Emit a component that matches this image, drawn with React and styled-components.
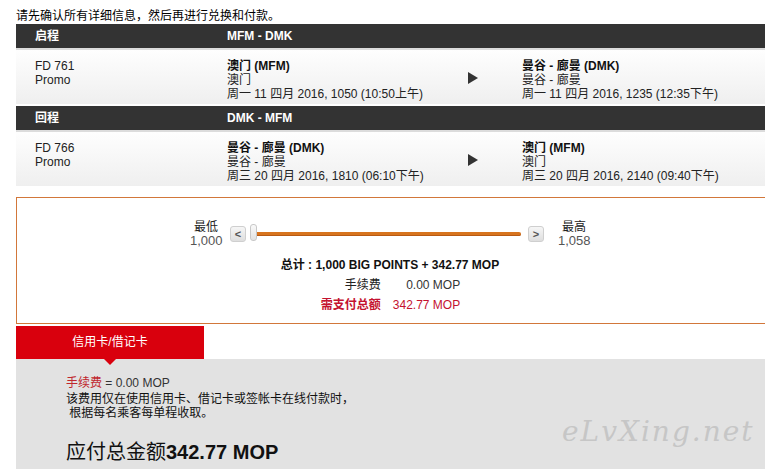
import React from "react"
import styled, { createGlobalStyle } from "styled-components"

const GlobalStyle = createGlobalStyle`
  body {
    margin: 0;
    background: #fff;
    color: #222;
    font-family: "Liberation Sans", Arial, "Noto Sans CJK SC", sans-serif;
    font-size: 12px;
    overflow: hidden;
  }
`

const Page = styled.div`
  padding: 9px 0 0 16px;
  width: 770px;
  position: relative;
`

const Intro = styled.div`
  line-height: 15px;
  color: #000;
`

const LegHeader = styled.div`
  display: grid;
  grid-template-columns: 192px 1fr;
  padding-left: 19px;
  height: 24px;
  line-height: 24px;
  background: #333;
  color: #fff;
  font-weight: bold;
  margin-top: ${(p) => (p.$first ? "0" : "2px")};
`

const LegRow = styled.div`
  display: grid;
  grid-template-columns: 192px 241px 54px 1fr;
  align-items: center;
  padding: 9px 0 3px 19px;
  border-top: 2px solid #dcdcdc;
  background: linear-gradient(#fefefe, #efefef);
  line-height: 14px;
  color: #222;
`

const Cell = styled.div`
  align-self: start;
`

const Strong = styled.div`
  font-weight: bold;
  color: #111;
`

const Arrow = styled.div`
  width: 0;
  height: 0;
  border-top: 6px solid transparent;
  border-bottom: 6px solid transparent;
  border-left: 10px solid #333;
  margin-top: -4px;
`

const PointsBox = styled.div`
  margin-top: 11px;
  border: 1px solid #d2773a;
  padding: 22px 22px 8px 0;
  display: flex;
  flex-direction: column;
  align-items: center;
`

const SliderRow = styled.div`
  display: flex;
  align-items: center;
  height: 28px;
  margin-bottom: 7px;
`

const Bound = styled.div`
  text-align: center;
  line-height: 14px;
  color: #222;
  width: 32px;
  margin-left: ${(p) => p.$offset || "0"};

  span {
    display: block;
    color: #555;
    font-size: 13px;
  }
`

const StepButton = styled.div`
  width: 16px;
  height: 16px;
  box-sizing: border-box;
  border: 1px solid #cfcfcf;
  border-radius: 3px;
  background: linear-gradient(#f6f6f6, #dedede);
  color: #555;
  font-weight: bold;
  font-size: 11px;
  line-height: 14px;
  text-align: center;
  margin: ${(p) => p.$margin};
`

const Track = styled.div`
  position: relative;
  width: 270px;
  height: 4px;
  border-radius: 2px;
  background: #d7741e;
  box-shadow: inset 0 -1px 0 #b85a14;
  margin-left: 5px;
`

const Thumb = styled.div`
  position: absolute;
  left: -1px;
  top: -8px;
  width: 7px;
  height: 17px;
  box-sizing: border-box;
  border: 1px solid #c8c8c8;
  border-radius: 3px;
  background: linear-gradient(#fafafa, #e2e2e2);
`

const TotalLine = styled.div`
  line-height: 20px;
  font-weight: bold;
  color: #111;
`

const FeeTable = styled.div`
  display: grid;
  grid-template-columns: auto auto;
  column-gap: 12px;
  line-height: 20px;
  margin-left: 1px;
`

const FeeLabel = styled.div`
  text-align: right;
  color: ${(p) => (p.$red ? "#c4122f" : "#222")};
  font-weight: ${(p) => (p.$red ? "bold" : "normal")};
`

const FeeValue = styled.div`
  text-align: right;
  color: ${(p) => (p.$red ? "#c4122f" : "#333")};
`

const TabBar = styled.div`
  margin-top: 2px;
  display: flex;
`

const Tab = styled.div`
  position: relative;
  width: 188px;
  height: 33px;
  line-height: 33px;
  background: #d9000d;
  color: #fff;
  text-align: center;

  &::after {
    content: "";
    position: absolute;
    left: 88px;
    bottom: -6px;
    border-left: 6px solid transparent;
    border-right: 6px solid transparent;
    border-top: 6px solid #d9000d;
  }
`

const PayPanel = styled.div`
  background: #e2e2e2;
  padding: 17px 0 40px 50px;
  line-height: 14px;
  color: #111;
`

const FeeNote = styled.div`
  margin-bottom: 2px;
  color: #333;

  b {
    font-weight: normal;
    color: #c0272d;
  }
`

const AmountDue = styled.div`
  margin-top: 20px;
  font-size: 20px;
  line-height: 24px;
  color: #111;

  b {
    font-weight: bold;
  }
`

const Watermark = styled.div`
  position: absolute;
  left: 562px;
  top: 415px;
  font-family: "DejaVu Serif", "Liberation Serif", serif;
  font-style: italic;
  font-size: 28px;
  letter-spacing: 2px;
  color: #c6c6c6;
`

const legs = [
  {
    title: "启程",
    route: "MFM - DMK",
    flight: "FD 761",
    from: { name: "澳门 (MFM)", city: "澳门", time: "周一 11 四月 2016, 1050 (10:50上午)" },
    to: { name: "曼谷 - 廊曼 (DMK)", city: "曼谷 - 廊曼", time: "周一 11 四月 2016, 1235 (12:35下午)" },
  },
  {
    title: "回程",
    route: "DMK - MFM",
    flight: "FD 766",
    from: { name: "曼谷 - 廊曼 (DMK)", city: "曼谷 - 廊曼", time: "周三 20 四月 2016, 1810 (06:10下午)" },
    to: { name: "澳门 (MFM)", city: "澳门", time: "周三 20 四月 2016, 2140 (09:40下午)" },
  },
]

const Stop = ({ stop }) => (
  <Cell>
    <Strong>{stop.name}</Strong>
    <div>{stop.city}</div>
    <div>{stop.time}</div>
  </Cell>
)

export default function App() {
  return (
    <>
      <GlobalStyle />
      <Page>
        <Intro>请先确认所有详细信息，然后再进行兑换和付款。</Intro>
        {legs.map((leg, i) => (
          <React.Fragment key={leg.flight}>
            <LegHeader $first={i === 0}>
              <div>{leg.title}</div>
              <div>{leg.route}</div>
            </LegHeader>
            <LegRow>
              <Cell>
                <div>{leg.flight}</div>
                <div>Promo</div>
              </Cell>
              <Stop stop={leg.from} />
              <Arrow />
              <Stop stop={leg.to} />
            </LegRow>
          </React.Fragment>
        ))}

        <PointsBox>
          <SliderRow>
            <Bound>
              最低<span>1,000</span>
            </Bound>
            <StepButton $margin="0 0 0 8px">&lt;</StepButton>
            <Track>
              <Thumb />
            </Track>
            <StepButton $margin="0 0 0 7px">&gt;</StepButton>
            <Bound $offset="14px">
              最高<span>1,058</span>
            </Bound>
          </SliderRow>
          <TotalLine>总计 : 1,000 BIG POINTS + 342.77 MOP</TotalLine>
          <FeeTable>
            <FeeLabel>手续费</FeeLabel>
            <FeeValue>0.00 MOP</FeeValue>
            <FeeLabel $red>需支付总额</FeeLabel>
            <FeeValue $red>342.77 MOP</FeeValue>
          </FeeTable>
        </PointsBox>

        <TabBar>
          <Tab>信用卡/借记卡</Tab>
        </TabBar>
        <PayPanel>
          <FeeNote>
            <b>手续费</b> = 0.00 MOP
          </FeeNote>
          <div>该费用仅在使用信用卡、借记卡或签帐卡在线付款时，</div>
          <div>&nbsp;根据每名乘客每单程收取。</div>
          <AmountDue>
            应付总金额<b>342.77 MOP</b>
          </AmountDue>
        </PayPanel>
        <Watermark>eLvXing.net</Watermark>
      </Page>
    </>
  )
}
